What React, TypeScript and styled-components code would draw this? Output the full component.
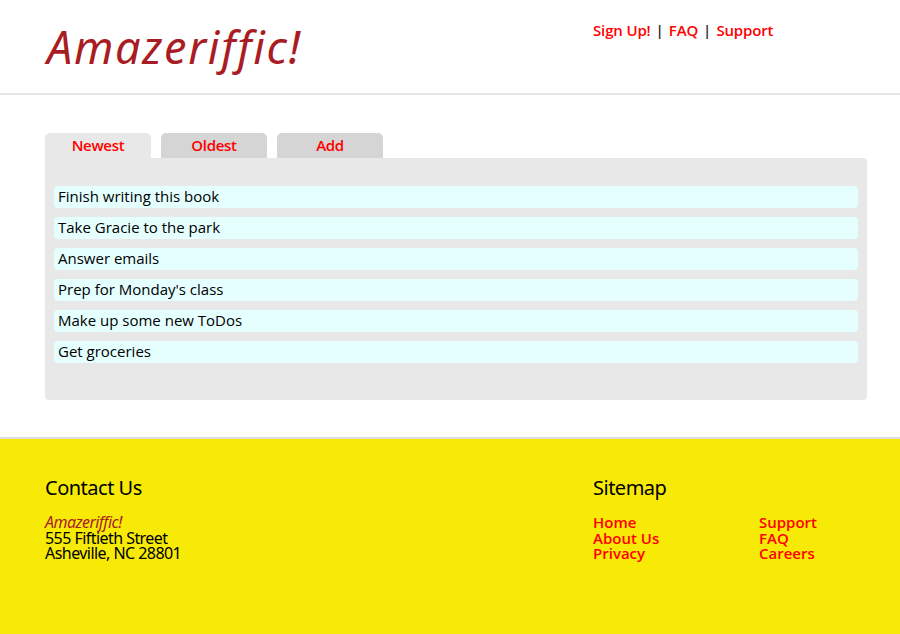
import React from "react";
import styled, { createGlobalStyle } from "styled-components";

const Global = createGlobalStyle`
  html, body { margin: 0; padding: 0; background: #ffffff; }
  body { font-family: "Open Sans", "Noto Sans", sans-serif; }
  * { box-sizing: border-box; }
`;

const Page = styled.div`
  display: flex;
  flex-direction: column;
  min-height: 634px;
`;

const Header = styled.header`
  height: 95px;
  border-bottom: 2px solid #e6e6e6;
  display: grid;
  grid-template-columns: 548px 1fr;
  padding-left: 45px;
`;

const Logo = styled.h1`
  margin: 0;
  padding-top: 19px;
  padding-left: 2px;
  font-family: "Noto Sans", sans-serif;
  font-style: italic;
  font-weight: 400;
  font-size: 45px;
  line-height: 56px;
  letter-spacing: 1.7px;
  color: #a81c24;
`;

const Nav = styled.nav`
  padding-top: 19px;
  font-size: 15px;
  font-weight: 600;
  line-height: 22px;
  color: #222;
  display: flex;
  gap: 5px;
`;

const NavLink = styled.a`
  color: #ff0000;
  text-decoration: none;
  letter-spacing: -0.15px;
`;

const Main = styled.main`
  padding: 38px 33px 37px 45px;
  background: #fff;
`;

const Tabs = styled.div`
  display: flex;
  gap: 10px;
`;

const Tab = styled.a<{ $active?: boolean }>`
  width: 106px;
  height: 25px;
  display: flex;
  align-items: center;
  justify-content: center;
  padding-bottom: 1px;
  background: ${(p) => (p.$active ? "#e8e8e8" : "#d5d5d5")};
  border-radius: 5px 5px 0 0;
  color: #ff0000;
  font-weight: 600;
  font-size: 15px;
  letter-spacing: -0.3px;
  text-decoration: none;
`;

const Panel = styled.div`
  background: #e8e8e8;
  border-radius: 0 4px 4px 4px;
  height: 242px;
  padding: 28px 9px 0 9px;
  display: flex;
  flex-direction: column;
  gap: 9px;
`;

const Item = styled.div`
  background: #e5ffff;
  border-radius: 4px;
  height: 22px;
  line-height: 21px;
  padding-left: 4px;
  font-size: 15px;
  font-weight: 500;
  color: #000;
`;

const Footer = styled.footer`
  flex: 1;
  background: #f7ea07;
  border-top: 2px solid #dcdcdc;
  padding: 37px 0 0 45px;
  display: grid;
  grid-template-columns: 548px 1fr;
`;

const FooterHeading = styled.h2`
  margin: 0 0 15px;
  font-family: "Noto Sans", sans-serif;
  font-weight: 400;
  font-size: 20px;
  line-height: 24px;
  letter-spacing: -0.5px;
  color: #000;
`;

const Address = styled.div`
  font-family: "Noto Sans", sans-serif;
  font-size: 16px;
  line-height: 15.5px;
  letter-spacing: -0.55px;
  color: #000;
`;

const AddressName = styled.div`
  font-style: italic;
  color: #a81c24;
`;

const LinkGrid = styled.div`
  display: grid;
  grid-template-columns: 166px 166px;
`;

const LinkCol = styled.div`
  display: flex;
  flex-direction: column;
`;

const FootLink = styled.a`
  color: #ff0000;
  font-weight: 600;
  font-size: 15px;
  line-height: 15.5px;
  text-decoration: none;
`;

const todos = [
  "Finish writing this book",
  "Take Gracie to the park",
  "Answer emails",
  "Prep for Monday's class",
  "Make up some new ToDos",
  "Get groceries",
];

export default function App() {
  return (
    <Page>
      <Global />
      <Header>
        <Logo>Amazeriffic!</Logo>
        <Nav>
          <NavLink href="#">Sign Up!</NavLink>|<NavLink href="#">FAQ</NavLink>|
          <NavLink href="#">Support</NavLink>
        </Nav>
      </Header>
      <Main>
        <Tabs>
          <Tab $active href="#">Newest</Tab>
          <Tab href="#">Oldest</Tab>
          <Tab href="#">Add</Tab>
        </Tabs>
        <Panel>
          {todos.map((t) => (
            <Item key={t}>{t}</Item>
          ))}
        </Panel>
      </Main>
      <Footer>
        <div>
          <FooterHeading>Contact Us</FooterHeading>
          <Address>
            <AddressName>Amazeriffic!</AddressName>
            <div>555 Fiftieth Street</div>
            <div>Asheville, NC 28801</div>
          </Address>
        </div>
        <div>
          <FooterHeading>Sitemap</FooterHeading>
          <LinkGrid>
            <LinkCol>
              <FootLink href="#">Home</FootLink>
              <FootLink href="#">About Us</FootLink>
              <FootLink href="#">Privacy</FootLink>
            </LinkCol>
            <LinkCol>
              <FootLink href="#">Support</FootLink>
              <FootLink href="#">FAQ</FootLink>
              <FootLink href="#">Careers</FootLink>
            </LinkCol>
          </LinkGrid>
        </div>
      </Footer>
    </Page>
  );
}
